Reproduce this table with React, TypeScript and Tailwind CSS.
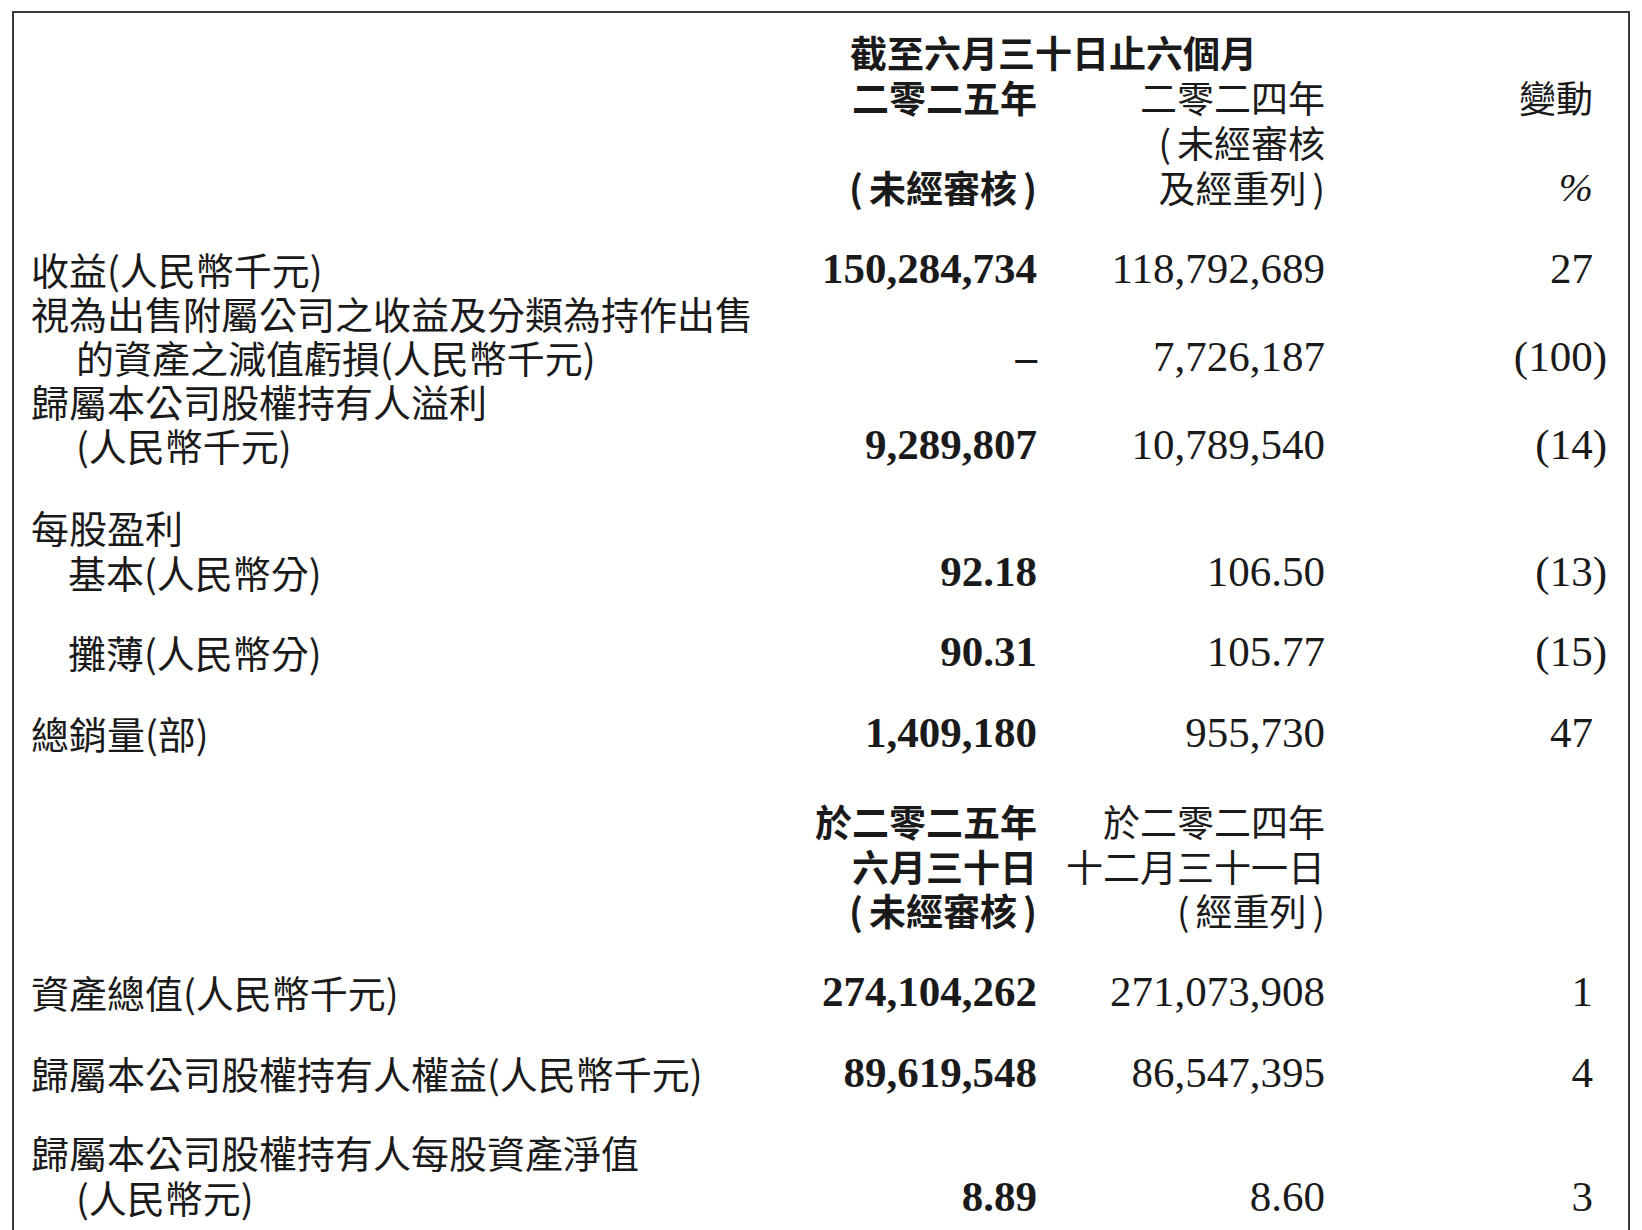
import React from "react";

const cjk = "font-['Noto_Sans_CJK_TC',sans-serif]";
const num = "font-['Liberation_Serif',serif]";

type RowProps = {
  mt?: string;
  label?: React.ReactNode;
  pl?: string;
  c1?: React.ReactNode;
  c2?: React.ReactNode;
  c3?: React.ReactNode;
  c3paren?: boolean;
};

function Row({ mt = "", label, pl = "", c1, c2, c3, c3paren }: RowProps) {
  return (
    <div className={`grid h-[44px] grid-cols-[729px_277px_288px_282px] items-center ${mt}`}>
      <div className={`${cjk} whitespace-nowrap text-[38px] leading-[44px] text-[#1a1a1a] ${pl}`}>{label}</div>
      <div className={`${num} whitespace-nowrap text-right text-[43px] font-bold leading-[44px] text-[#1a1a1a]`}>{c1}</div>
      <div className={`${num} whitespace-nowrap text-right text-[43px] leading-[44px] text-[#1a1a1a]`}>{c2}</div>
      <div
        className={`${num} whitespace-nowrap text-right text-[43px] leading-[44px] text-[#1a1a1a] ${
          c3paren ? "" : "pr-[14px]"
        }`}
      >
        {c3}
      </div>
    </div>
  );
}

function HeadRow({
  mt = "",
  c1,
  c2,
  c3,
}: {
  mt?: string;
  c1?: React.ReactNode;
  c2?: React.ReactNode;
  c3?: React.ReactNode;
}) {
  return (
    <div className={`grid h-[44px] grid-cols-[729px_277px_288px_282px] items-center ${mt}`}>
      <div />
      <div className={`${cjk} whitespace-nowrap text-right text-[37px] font-bold leading-[44px] text-[#1a1a1a]`}>{c1}</div>
      <div className={`${cjk} whitespace-nowrap text-right text-[37px] leading-[44px] text-[#1a1a1a]`}>{c2}</div>
      <div className={`${cjk} whitespace-nowrap pr-[14px] text-right text-[37px] leading-[44px] text-[#1a1a1a]`}>{c3}</div>
    </div>
  );
}

const L = () => <span className="pr-[6px]">(</span>;
const R = () => <span className="pl-[6px]">)</span>;

export default function App() {
  return (
    <div className="h-[1230px] w-[1642px] overflow-hidden bg-white pl-[12px] pt-[11px]">
      <div className="h-[1240px] w-[1618px] border-2 border-b-0 border-[#3a3a3a] pl-[17px] pt-[17px]">
        {/* Header block */}
        <div className="grid h-[44px] grid-cols-[729px_277px_288px_282px] items-center">
          <div />
          <div
            className={`${cjk} col-span-2 whitespace-nowrap pl-[90px] text-[37px] font-bold leading-[44px] text-[#1a1a1a]`}
          >
            截至六月三十日止六個月
          </div>
          <div />
        </div>
        <HeadRow mt="mt-[1px]" c1="二零二五年" c2="二零二四年" c3="變動" />
        <HeadRow
          mt="mt-[1px]"
          c2={
            <>
              <L />
              未經審核
            </>
          }
        />
        <div className="mt-[1px] grid h-[44px] grid-cols-[729px_277px_288px_282px] items-center">
          <div />
          <div className={`${cjk} whitespace-nowrap text-right text-[37px] font-bold leading-[44px] text-[#1a1a1a]`}>
            <L />
            未經審核
            <R />
          </div>
          <div className={`${cjk} whitespace-nowrap text-right text-[37px] leading-[44px] text-[#1a1a1a]`}>
            及經重列
            <R />
          </div>
          <div className={`${num} whitespace-nowrap pr-[14px] text-right text-[41px] italic leading-[44px] text-[#1a1a1a]`}>
            %
          </div>
        </div>

        {/* Block A */}
        <Row mt="mt-[38px]" label="收益(人民幣千元)" c1="150,284,734" c2="118,792,689" c3="27" />
        <Row label="視為出售附屬公司之收益及分類為持作出售" />
        <Row pl="pl-[45px]" label="的資產之減值虧損(人民幣千元)" c1="–" c2="7,726,187" c3="(100)" c3paren />
        <Row label="歸屬本公司股權持有人溢利" />
        <Row pl="pl-[45px]" label="(人民幣千元)" c1="9,289,807" c2="10,789,540" c3="(14)" c3paren />

        {/* EPS */}
        <Row mt="mt-[38px]" label="每股盈利" />
        <Row mt="mt-[1px]" pl="pl-[37px]" label="基本(人民幣分)" c1="92.18" c2="106.50" c3="(13)" c3paren />
        <Row mt="mt-[36px]" pl="pl-[37px]" label="攤薄(人民幣分)" c1="90.31" c2="105.77" c3="(15)" c3paren />

        <Row mt="mt-[37px]" label="總銷量(部)" c1="1,409,180" c2="955,730" c3="47" />

        {/* Header 2 */}
        <HeadRow mt="mt-[44px]" c1="於二零二五年" c2="於二零二四年" />
        <HeadRow mt="mt-[1px]" c1="六月三十日" c2="十二月三十一日" />
        <HeadRow
          c1={
            <>
              <L />
              未經審核
              <R />
            </>
          }
          c2={
            <>
              <L />
              經重列
              <R />
            </>
          }
        />

        <Row mt="mt-[38px]" label="資產總值(人民幣千元)" c1="274,104,262" c2="271,073,908" c3="1" />
        <Row mt="mt-[37px]" label="歸屬本公司股權持有人權益(人民幣千元)" c1="89,619,548" c2="86,547,395" c3="4" />
        <Row mt="mt-[35px]" label="歸屬本公司股權持有人每股資產淨值" />
        <Row mt="mt-[1px]" pl="pl-[45px]" label="(人民幣元)" c1="8.89" c2="8.60" c3="3" />
      </div>
    </div>
  );
}
